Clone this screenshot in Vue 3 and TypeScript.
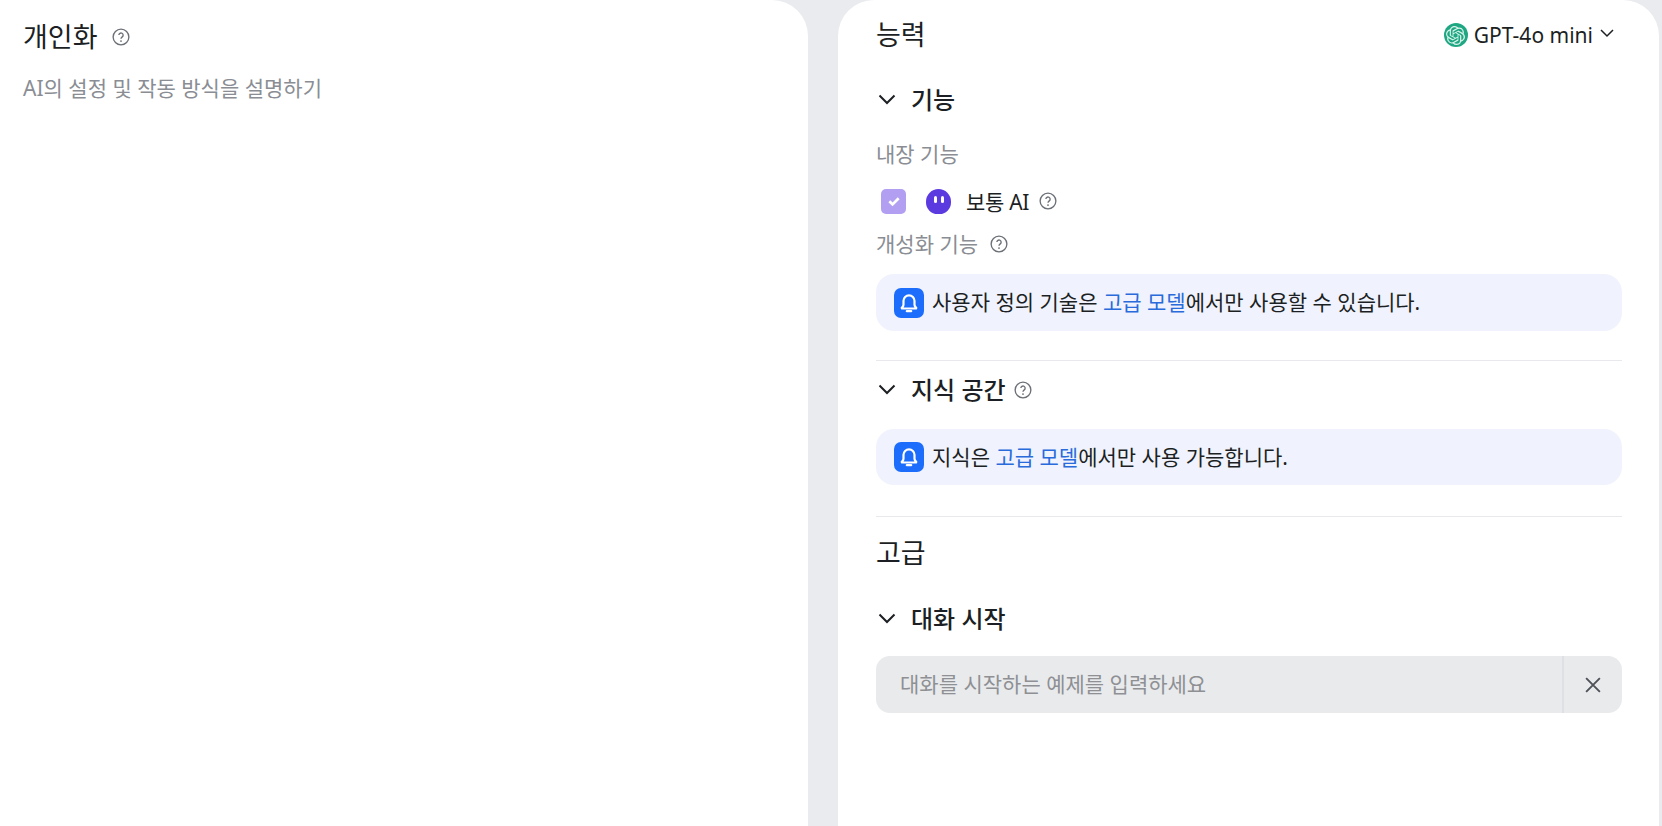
<script setup lang="ts">
const gpt = "M22.2819 9.8211a5.9847 5.9847 0 0 0-.5157-4.9108 6.0462 6.0462 0 0 0-6.5098-2.9A6.0651 6.0651 0 0 0 4.9807 4.1818a5.9847 5.9847 0 0 0-3.9977 2.9 6.0462 6.0462 0 0 0 .7427 7.0966 5.98 5.98 0 0 0 .511 4.9107 6.051 6.051 0 0 0 6.5146 2.9001A5.9847 5.9847 0 0 0 13.2599 24a6.0557 6.0557 0 0 0 5.7718-4.2058 5.9894 5.9894 0 0 0 3.9977-2.9001 6.0557 6.0557 0 0 0-.7475-7.0729zm-9.022 12.6081a4.4755 4.4755 0 0 1-2.8764-1.0408l.1419-.0804 4.7783-2.7582a.7948.7948 0 0 0 .3927-.6813v-6.7369l2.02 1.1686a.071.071 0 0 1 .038.052v5.5826a4.504 4.504 0 0 1-4.4945 4.4944zm-9.6607-4.1254a4.4708 4.4708 0 0 1-.5346-3.0137l.142.0852 4.783 2.7582a.7712.7712 0 0 0 .7806 0l5.8428-3.3685v2.3324a.0804.0804 0 0 1-.0332.0615L9.74 19.9502a4.4992 4.4992 0 0 1-6.1408-1.6464zM2.3408 7.8956a4.485 4.485 0 0 1 2.3655-1.9728V11.6a.7664.7664 0 0 0 .3879.6765l5.8144 3.3543-2.0201 1.1685a.0757.0757 0 0 1-.071 0l-4.8303-2.7865A4.504 4.504 0 0 1 2.3408 7.872zm16.5963 3.8558L13.1038 8.364 15.1192 7.2a.0757.0757 0 0 1 .071 0l4.8303 2.7913a4.4944 4.4944 0 0 1-.6765 8.1042v-5.6772a.79.79 0 0 0-.407-.667zm2.0107-3.0231l-.142-.0852-4.7735-2.7818a.7759.7759 0 0 0-.7854 0L9.409 9.2297V6.8974a.0662.0662 0 0 1 .0284-.0615l4.8303-2.7866a4.4992 4.4992 0 0 1 6.6802 4.66zM8.3065 12.863l-2.02-1.1638a.0804.0804 0 0 1-.038-.0567V6.0742a4.4992 4.4992 0 0 1 7.3757-3.4537l-.142.0805L8.704 5.459a.7948.7948 0 0 0-.3927.6813zm1.0976-2.3654l2.602-1.4998 2.6069 1.4998v2.9994l-2.5974 1.4997-2.6067-1.4997Z";
</script>

<template>
  <div class="page">
    <section class="panel left">
      <div class="left-head">
        <h2 class="title">개인화</h2>
        <svg class="help" viewBox="0 0 16 16"><circle cx="8" cy="8" r="7" /><path d="M6.1 6.3a1.9 1.9 0 1 1 3 1.6c-.7.5-1.1.8-1.1 1.6" /><circle class="dot" cx="8" cy="11.6" r=".8" /></svg>
      </div>
      <p class="placeholder">AI의 설정 및 작동 방식을 설명하기</p>
    </section>

    <section class="panel right">
      <div class="right-head">
        <h2 class="title">능력</h2>
        <div class="model">
          <span class="gpt"><svg viewBox="0 0 24 24"><path :d="gpt" /></svg></span>
          <span>GPT-4o mini</span>
          <svg class="chev-small" viewBox="0 0 16 10"><path d="M2 2l6 6 6-6" /></svg>
        </div>
      </div>

      <div class="sec-head first">
        <svg class="chev" viewBox="0 0 18 12"><path d="M1.5 1.5l7.5 7.5 7.5-7.5" /></svg>
        <h3>기능</h3>
      </div>
      <div class="sub">내장 기능</div>
      <div class="skill">
        <span class="check"><svg viewBox="0 0 12 12"><path d="M2.5 6.2l2.4 2.3 4.6-4.6" /></svg></span>
        <span class="bot"><i></i><i></i></span>
        <span class="skill-name">보통 AI</span>
        <svg class="help" viewBox="0 0 16 16"><circle cx="8" cy="8" r="7" /><path d="M6.1 6.3a1.9 1.9 0 1 1 3 1.6c-.7.5-1.1.8-1.1 1.6" /><circle class="dot" cx="8" cy="11.6" r=".8" /></svg>
      </div>
      <div class="sub custom">
        <span>개성화 기능</span>
        <svg class="help" viewBox="0 0 16 16"><circle cx="8" cy="8" r="7" /><path d="M6.1 6.3a1.9 1.9 0 1 1 3 1.6c-.7.5-1.1.8-1.1 1.6" /><circle class="dot" cx="8" cy="11.6" r=".8" /></svg>
      </div>
      <div class="notice">
        <span class="bell"><svg viewBox="0 0 20 20"><path d="M10 3a5 5 0 0 0-5 5v3.5c0 1.2-.7 2-1.5 2.8-.2.3 0 .7.3.7h12.4c.3 0 .5-.4.3-.7-.8-.8-1.5-1.6-1.5-2.8V8a5 5 0 0 0-5-5z" /><path d="M8 17.4h4" /></svg></span>
        <span class="notice-text">사용자 정의 기술은 <a>고급 모델</a>에서만 사용할 수 있습니다.</span>
      </div>
      <hr />

      <div class="sec-head mid">
        <svg class="chev" viewBox="0 0 18 12"><path d="M1.5 1.5l7.5 7.5 7.5-7.5" /></svg>
        <h3>지식 공간</h3>
        <svg class="help" viewBox="0 0 16 16"><circle cx="8" cy="8" r="7" /><path d="M6.1 6.3a1.9 1.9 0 1 1 3 1.6c-.7.5-1.1.8-1.1 1.6" /><circle class="dot" cx="8" cy="11.6" r=".8" /></svg>
      </div>
      <div class="notice second">
        <span class="bell"><svg viewBox="0 0 20 20"><path d="M10 3a5 5 0 0 0-5 5v3.5c0 1.2-.7 2-1.5 2.8-.2.3 0 .7.3.7h12.4c.3 0 .5-.4.3-.7-.8-.8-1.5-1.6-1.5-2.8V8a5 5 0 0 0-5-5z" /><path d="M8 17.4h4" /></svg></span>
        <span class="notice-text">지식은 <a>고급 모델</a>에서만 사용 가능합니다.</span>
      </div>
      <hr />

      <h2 class="title adv">고급</h2>
      <div class="sec-head start">
        <svg class="chev" viewBox="0 0 18 12"><path d="M1.5 1.5l7.5 7.5 7.5-7.5" /></svg>
        <h3>대화 시작</h3>
      </div>
      <div class="field">
        <div class="field-text">대화를 시작하는 예제를 입력하세요</div>
        <div class="field-x"><svg viewBox="0 0 16 16"><path d="M2.5 2.5l11 11M13.5 2.5l-11 11" /></svg></div>
      </div>
    </section>
  </div>
</template>

<style>
html, body { margin: 0; height: 100%; overflow: hidden; background: #eaebee; }
</style>

<style scoped>
.page {
  display: flex;
  gap: 30px;
  height: 826px;
  overflow: hidden;
  background: #eaebee;
  color: #1c1f23;
  font-family: "Noto Sans", "Noto Sans CJK KR", sans-serif;
  font-size: 21px;
}
.panel {
  background: #fff;
  border-radius: 0 36px 0 0;
  height: 900px;
  box-sizing: border-box;
}
.left { width: 808px; padding: 19px 24px 0 23px; }
.right { width: 821px; padding: 17px 37px 0 38px; border-radius: 36px 36px 0 0; }
.title { margin: 0; font-size: 27px; font-weight: 400; line-height: 36px; }
.left-head { display: flex; align-items: center; gap: 14px; }
.help { width: 18px; height: 18px; flex: none; fill: none; stroke: #6b6f76; stroke-width: 1.2; }
.help .dot { fill: #6b6f76; stroke: none; }
.placeholder { margin: 20px 0 0; line-height: 26px; color: #8a8d93; }
.right-head { display: flex; justify-content: space-between; align-items: center; height: 36px; }
.model { display: flex; align-items: center; gap: 6px; margin-right: 7px; }
.gpt { width: 24px; height: 24px; border-radius: 50%; background: #1fa783; display: flex; align-items: center; justify-content: center; }
.gpt svg { width: 19px; height: 19px; fill: #d9f3ea; }
.chev-small { width: 16px; height: 10px; margin-top: -4px; fill: none; stroke: #1c1f23; stroke-width: 1.5; }
.sec-head { display: flex; align-items: center; height: 30px; }
.sec-head.first { margin-top: 32px; }
.sec-head h3 { margin: 0; font-size: 24px; font-weight: 500; line-height: 30px; }
.chev { width: 18px; height: 12px; margin: 0 15px 0 2px; fill: none; stroke: #1c1f23; stroke-width: 2; }
.sec-head .help { margin-left: 8px; }
.sub { color: #8a8d93; line-height: 26px; margin-top: 26px; }
.skill { display: flex; align-items: center; height: 28px; margin-top: 20px; padding-left: 5px; }
.check { width: 25px; height: 25px; border-radius: 5px; background: #b39ff2; display: flex; align-items: center; justify-content: center; }
.check svg { width: 16px; height: 16px; fill: none; stroke: #fff; stroke-width: 2; }
.bot { width: 25px; height: 25px; margin-left: 20px; border-radius: 50% 50% 46% 46%; background: #5b3be0; display: flex; align-items: center; justify-content: center; gap: 4px; }
.bot i { width: 3px; height: 7px; border-radius: 2px; background: #fff; margin-top: -3px; }
.skill-name { margin-left: 15px; margin-right: 10px; letter-spacing: -.3px; }
.custom { display: flex; align-items: center; gap: 12px; margin-top: 16px; }
.notice { display: flex; align-items: center; gap: 8px; height: 57px; margin-top: 17px; padding-left: 18px; border-radius: 18px; background: #f0f3fd; }
.notice.second { margin-top: 24px; height: 56px; }
.notice-text { padding-bottom: 3px; }
.bell { width: 30px; height: 30px; flex: none; border-radius: 7px; background: #1c6dfb; display: flex; align-items: center; justify-content: center; }
.bell svg { width: 22px; height: 22px; fill: none; stroke: #fff; stroke-width: 2; stroke-linecap: round; }
a { color: #2a6bdc; }
hr { border: 0; border-top: 1px solid #e8e9ec; margin: 29px 0 0; }
.second + hr { margin-top: 31px; }
.mid { margin-top: 14px; }
.adv { margin-top: 18px; }
.start { margin-top: 33px; }
.field { display: flex; height: 57px; margin-top: 22px; border-radius: 14px; background: #e9eaec; overflow: hidden; }
.field-text { flex: 1; padding-left: 24px; line-height: 57px; color: #8e9094; }
.field-x { width: 60px; border-left: 2px solid #dfe0e3; display: flex; align-items: center; justify-content: center; box-sizing: border-box; }
.field-x svg { width: 20px; height: 20px; fill: none; stroke: #4e5259; stroke-width: 1.5; }
</style>
